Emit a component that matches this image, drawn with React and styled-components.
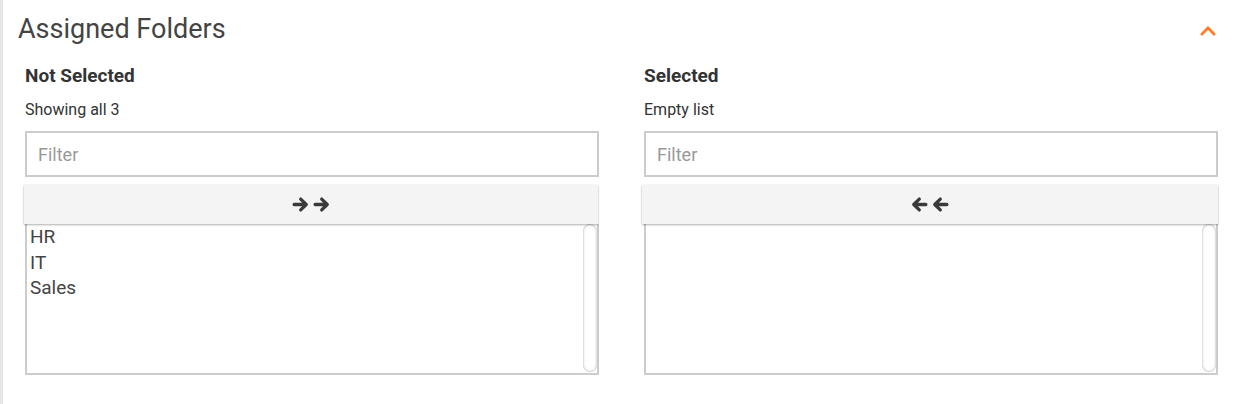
import React from "react";
import styled, { createGlobalStyle } from "styled-components";
import { FaChevronUp } from "react-icons/fa";

const GlobalStyle = createGlobalStyle`
  html, body { margin: 0; padding: 0; background: #fff; }
  body { font-family: Roboto, "Liberation Sans", sans-serif; }
  * { box-sizing: border-box; }
`;

const Panel = styled.section`
  width: 1240px;
  height: 404px;
  border-left: 3px solid #e6e6e6;
  background: #fff;
`;

const Header = styled.header`
  display: flex;
  align-items: center;
  justify-content: space-between;
  padding: 13px 23px 0 15px;
`;

const Title = styled.h2`
  margin: 0;
  font-size: 27px;
  line-height: 32px;
  font-weight: 400;
  color: #444;
`;

const Toggle = styled.button`
  border: 0;
  background: none;
  padding: 0;
  margin-top: 4px;
  display: flex;
  color: #fd7f2c;
  cursor: pointer;
`;

const Columns = styled.div`
  display: grid;
  grid-template-columns: 574px 574px;
  column-gap: 45px;
  padding: 20px 22px 0 22px;
`;

const Column = styled.div`
  display: flex;
  flex-direction: column;
`;

const Label = styled.div`
  font-size: 19px;
  line-height: 22px;
  font-weight: 700;
  color: #333;
`;

const Info = styled.div`
  margin-top: 13px;
  font-size: 16px;
  line-height: 20px;
  color: #333;
`;

const FilterInput = styled.input`
  margin-top: 11px;
  height: 46px;
  width: 100%;
  border: 2px solid #ccc;
  padding: 0 11px;
  font-family: inherit;
  font-size: 18px;
  color: #444;
  outline: none;
  &::placeholder { color: #999; }
`;

const MoveButton = styled.button`
  margin-top: 8px;
  height: 39px;
  width: ${(p) => (p.$wide ? "576px" : "574px")};
  margin-left: ${(p) => (p.$wide ? "-2px" : "-1px")};
  border: 0;
  background: #f4f4f4;
  box-shadow: 0 1px 2px rgba(0, 0, 0, 0.3), 0 0 1px rgba(0, 0, 0, 0.12);
  display: flex;
  align-items: center;
  justify-content: center;
  gap: 4px;
  color: #3a3a3a;
  cursor: pointer;
  position: relative;
  z-index: 1;
  padding: 0;
`;

const ListBox = styled.div`
  height: 151px;
  border: 2px solid #ccc;
  border-top: 0;
  display: flex;
`;

const Items = styled.div`
  flex: 1;
  padding-left: 3px;
`;

const ScrollTrack = styled.div`
  width: 14px;
  margin-bottom: 1px;
  border-radius: 7px;
  background: #fff;
  box-shadow: inset 0 0 2px rgba(0, 0, 0, 0.35), inset 0 0 4px rgba(0, 0, 0, 0.08);
`;

const Item = styled.div`
  font-size: 19px;
  line-height: 25.5px;
  color: #444;
`;

function Arrow({ dir }) {
  const d =
    dir === "right"
      ? "M2 8 H13.4 M8.2 2.9 L13.4 8 L8.2 13.1"
      : "M14 8 H2.6 M7.8 2.9 L2.6 8 L7.8 13.1";
  return (
    <svg width="17" height="17" viewBox="0 0 16 16" aria-hidden="true">
      <path
        d={d}
        fill="none"
        stroke="currentColor"
        strokeWidth="3.1"
        strokeLinecap="round"
        strokeLinejoin="round"
      />
    </svg>
  );
}

function DualColumn({ label, info, dir, wide, items }) {
  return (
    <Column>
      <Label>{label}</Label>
      <Info>{info}</Info>
      <FilterInput placeholder="Filter" />
      <MoveButton $wide={wide}>
        <Arrow dir={dir} />
        <Arrow dir={dir} />
      </MoveButton>
      <ListBox>
        <Items>
          {items.map((it) => (
            <Item key={it}>{it}</Item>
          ))}
        </Items>
        <ScrollTrack />
      </ListBox>
    </Column>
  );
}

export default function App() {
  return (
    <>
      <GlobalStyle />
      <Panel>
        <Header>
          <Title>Assigned Folders</Title>
          <Toggle aria-label="collapse">
            <FaChevronUp size={18} />
          </Toggle>
        </Header>
        <Columns>
          <DualColumn
            label="Not Selected"
            info="Showing all 3"
            dir="right"
            items={["HR", "IT", "Sales"]}
          />
          <DualColumn
            label="Selected"
            info="Empty list"
            dir="left"
            wide
            items={[]}
          />
        </Columns>
      </Panel>
    </>
  );
}
